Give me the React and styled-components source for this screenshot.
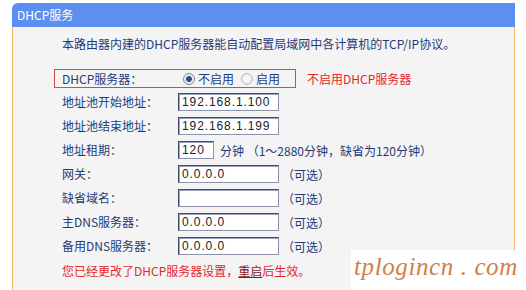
import React from "react";
import styled, { createGlobalStyle } from "styled-components";

const Global = createGlobalStyle`
  html, body { margin: 0; padding: 0; background: #ffffff; }
  body { font-family: "Noto Sans CJK SC", "Liberation Sans", sans-serif; }
`;

const Page = styled.div`
  width: 526px;
  height: 290px;
  overflow: hidden;
  position: relative;
  background: #ffffff;
  padding: 3px 0 0 12px;
  box-sizing: border-box;
`;

const Panel = styled.div`
  width: 503px;
  display: flex;
  flex-direction: column;
`;

const Header = styled.div`
  height: 24px;
  background: #5d8ff0;
  border-top-left-radius: 6px;
  color: #ffffff;
  font-size: 12px;
  line-height: 24px;
  padding-left: 5px;
`;

const Body = styled.div`
  background: #f4f4f4;
  border-left: 1px solid #f2b666;
  border-right: 1px solid #f2b666;
  height: 270px;
  padding: 7px 0 0 49px;
  box-sizing: border-box;
  color: #1f3b78;
  font-size: 12px;
`;

const Intro = styled.div`
  line-height: 20px;
  height: 20px;
  margin-bottom: 12px;
  white-space: nowrap;
`;

const Form = styled.div`
  display: grid;
  grid-template-columns: 116px auto;
  grid-auto-rows: 24px;
  align-items: center;
`;

const Label = styled.div`
  white-space: nowrap;
  line-height: 18px;
`;

const Field = styled.div`
  display: flex;
  align-items: center;
  white-space: nowrap;
`;

const HighlightRow = styled.div`
  grid-column: 1 / span 2;
  display: flex;
  align-items: center;
`;

const RedBox = styled.div`
  display: grid;
  grid-template-columns: 116px auto;
  align-items: center;
  margin-left: -8px;
  padding-left: 7px;
  width: 233px;
  height: 17px;
  border: 1px solid #d9474b;
`;

const Radio = styled.span`
  width: 10px;
  height: 10px;
  border-radius: 50%;
  border: 1px solid ${(p) => (p.checked ? "#7f8a9e" : "#b8bcc4")};
  background: ${(p) =>
    p.checked
      ? "radial-gradient(circle, #2f4f8a 0 2.6px, #e8eaee 3.2px)"
      : "radial-gradient(circle, #f6f6f6 0 3px, #e2e4e8 5px)"};
  display: inline-block;
  margin: 0 ${(p) => (p.gap || 3)}px 0 ${(p) => p.lead || 0}px;
  flex: none;
`;

const Hint = styled.span`
  color: #e8262a;
  margin-left: 11px;
`;

const Input = styled.div`
  width: ${(p) => p.w}px;
  height: 18px;
  box-sizing: border-box;
  background: #ffffff;
  border-top: 1px solid #404a66;
  border-left: 1px solid #404a66;
  border-right: 1px solid #8a93ab;
  border-bottom: 1px solid #8a93ab;
  box-shadow: inset 1px 1px 0 #9aa4bc;
  font-family: "Liberation Sans", Arial, sans-serif;
  font-size: 12px;
  letter-spacing: 0.9px;
  color: #222222;
  line-height: 16px;
  padding-left: 3px;
  flex: none;
`;

const Note = styled.span`
  margin-left: ${(p) => p.ml ?? 3}px;
  color: #1f3b78;
`;

const Message = styled.div`
  grid-column: 1 / span 2;
  color: #e8262a;
  white-space: nowrap;
`;

const Reboot = styled.span`
  color: #8a1a1a;
  text-decoration: underline;
`;

const Watermark = styled.div`
  position: absolute;
  left: 351px;
  top: 250px;
  width: 175px;
  height: 40px;
  background: #ffffff;
  color: #cf8048;
  font-family: "Liberation Serif", serif;
  font-style: italic;
  font-size: 25px;
  line-height: 34px;
  padding-left: 3px;
  box-sizing: border-box;
  white-space: nowrap;
  letter-spacing: 0.6px;
`;

const rows = [
  { label: "地址池开始地址：", value: "192.168.1.100", w: 101 },
  { label: "地址池结束地址：", value: "192.168.1.199", w: 101 },
  { label: "地址租期：", value: "120", w: 36, note: "分钟 （1～2880分钟，缺省为120分钟）", ml: 6 },
  { label: "网关：", value: "0.0.0.0", w: 101, note: "（可选）" },
  { label: "缺省域名：", value: "", w: 101, note: "（可选）" },
  { label: "主DNS服务器：", value: "0.0.0.0", w: 101, note: "（可选）" },
  { label: "备用DNS服务器：", value: "0.0.0.0", w: 101, note: "（可选）" },
];

export default function App() {
  return (
    <Page>
      <Global />
      <Panel>
        <Header>DHCP服务</Header>
        <Body>
          <Intro>本路由器内建的DHCP服务器能自动配置局域网中各计算机的TCP/IP协议。</Intro>
          <Form>
            <HighlightRow>
              <RedBox>
                <Label>DHCP服务器：</Label>
                <Field>
                  <Radio checked lead={5} />
                  不启用
                  <Radio lead={7} />
                  启用
                </Field>
              </RedBox>
              <Hint>不启用DHCP服务器</Hint>
            </HighlightRow>
            {rows.map((r) => (
              <React.Fragment key={r.label}>
                <Label>{r.label}</Label>
                <Field>
                  <Input w={r.w}>{r.value}</Input>
                  {r.note && <Note ml={r.ml}>{r.note}</Note>}
                </Field>
              </React.Fragment>
            ))}
            <Message>
              您已经更改了DHCP服务器设置，<Reboot>重启</Reboot>后生效。
            </Message>
          </Form>
        </Body>
      </Panel>
      <Watermark>tplogincn . com</Watermark>
    </Page>
  );
}
